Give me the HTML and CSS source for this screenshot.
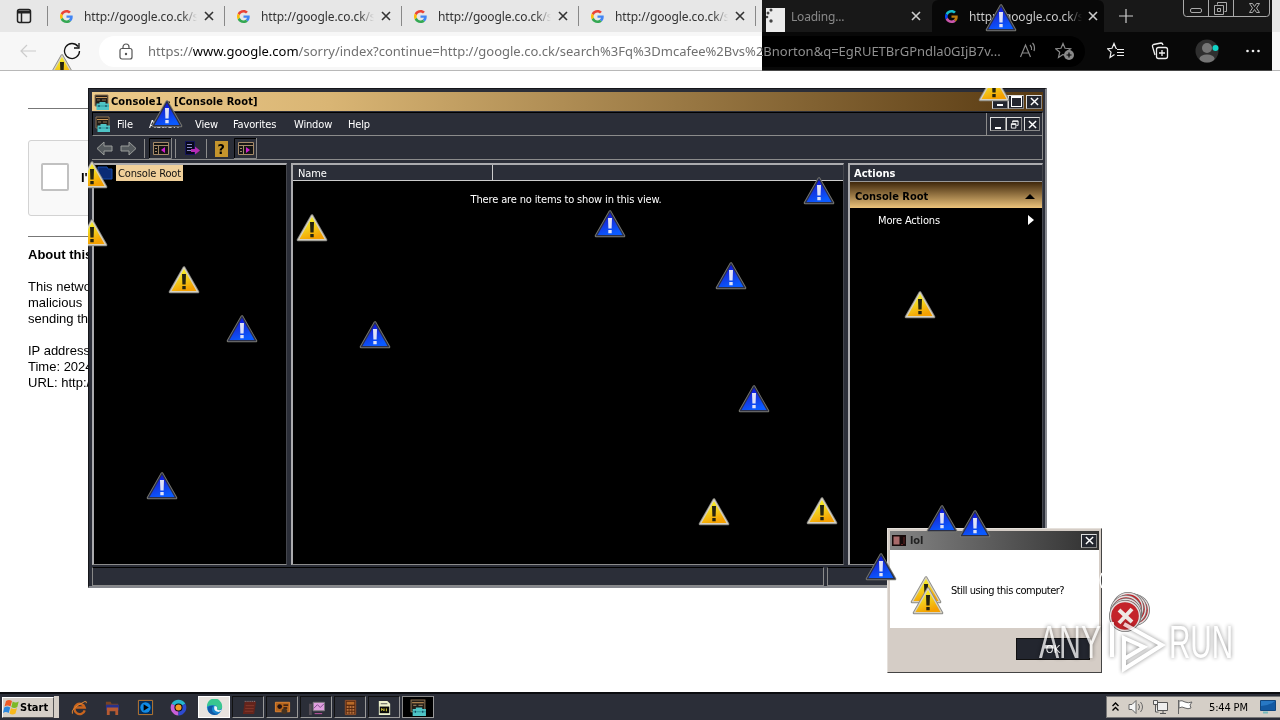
FILE: index.html
```
<!DOCTYPE html>
<html lang="en">
<head>
    <meta charset="UTF-8">
    <title>Desktop</title>
    <link rel="stylesheet" href="styles.css">
</head>
<body>
    <svg class="defs" width="0" height="0">
        <defs>
            <linearGradient id="gold" x1="0" y1="0" x2="0.4" y2="1">
                <stop offset="0" stop-color="#ffff20"/><stop offset="0.45" stop-color="#f2dc25"/><stop offset="1" stop-color="#f5a000"/>
            </linearGradient>
            <linearGradient id="blue" x1="0" y1="0" x2="0.4" y2="1">
                <stop offset="0" stop-color="#0000e8"/><stop offset="0.5" stop-color="#1530dc"/><stop offset="1" stop-color="#0a5aff"/>
            </linearGradient>
            <symbol id="warn" viewBox="0 0 32 28">
                <path d="M16 1.5 30 26H2Z" fill="url(#gold)" stroke="#8c8c88" stroke-width="2.6" stroke-linejoin="round"/>
                <path d="M16 1.8 29.6 25.7H2.4Z" fill="url(#gold)" stroke="#d8d2c0" stroke-width="1.3" stroke-linejoin="round"/>
                <path d="M14 8h4l-.4 10.500h-3.200zM14.300 20h3.400v3.300h-3.400z" fill="#25230f"/>
            </symbol>
            <symbol id="info" viewBox="0 0 32 28">
                <path d="M16 1.5 30 26H2Z" fill="url(#blue)" stroke="#77776f" stroke-width="2.6" stroke-linejoin="round"/>
                <path d="M16 1.8 29.6 25.7H2.4Z" fill="url(#blue)" stroke="#2a2f48" stroke-width="1.3" stroke-linejoin="round"/>
                <path d="M14 8h4l-.4 10.500h-3.200zM14.300 20h3.400v3.300h-3.400z" fill="#dfe2f8"/>
            </symbol>
            <symbol id="error" viewBox="0 0 34 34">
                <circle cx="17" cy="17" r="15" fill="#c4232a" stroke="#777" stroke-width="2"/>
                <circle cx="17" cy="17" r="14.500" fill="none" stroke="#e8dede" stroke-width="1.300"/>
            </symbol>
            <symbol id="google" viewBox="0 0 48 48">
                <path fill="#ea4335" d="M24 9.500c3.540 0 6.710 1.220 9.210 3.600l6.850-6.850C35.900 2.380 30.470 0 24 0 14.620 0 6.510 5.380 2.560 13.220l7.980 6.190C12.430 13.720 17.740 9.500 24 9.500z"/>
                <path fill="#4285f4" d="M46.980 24.550c0-1.570-.15-3.090-.38-4.550H24v9.020h12.940c-.58 2.960-2.260 5.480-4.780 7.180l7.730 6c4.510-4.180 7.090-10.360 7.090-17.650z"/>
                <path fill="#fbbc05" d="M10.530 28.590c-.48-1.450-.76-2.990-.76-4.590s.27-3.140.76-4.590l-7.980-6.190C.92 16.460 0 20.120 0 24s.92 7.540 2.560 10.780z"/>
                <path fill="#34a853" d="M24 48c6.480 0 11.930-2.130 15.890-5.810l-7.730-6c-2.150 1.450-4.920 2.300-8.160 2.300-6.260 0-11.570-4.220-13.470-9.910l-7.980 6.190C6.510 42.620 14.620 48 24 48z"/>
            </symbol>
            <symbol id="mmc" viewBox="0 0 16 16">
                <path d="M1 1h13v11H1z" fill="#221d18" stroke="#8b7355"/>
                <path d="M2 3.500h11" stroke="#c9975a"/><path d="M3 6h3M8 6h4" stroke="#8b7355"/>
                <path d="M2.500 9.500h3V8h6v1.500H15V16H2.500z" fill="#4fc4c6"/>
                <path d="M2.500 12H15" stroke="#2f9a9d"/><path d="M5 11v2M12 11v2" stroke="#135"/>
            </symbol>
            <symbol id="cross" viewBox="0 0 10 10">
                <path d="M1 1l8 8M9 1 1 9" fill="none" stroke="currentColor" stroke-width="1.600"/>
            </symbol>
        </defs>
    </svg>

    <div class="browser">
        <div class="tabs">
            <div class="tab-menu">
                <svg width="16" height="16" viewBox="0 0 16 16" fill="none" stroke="#222" stroke-width="1.500"><rect x="1.500" y="1.500" width="13" height="13" rx="2"/><path d="M1.500 4h13" stroke-width="3"/><path d="M5.500 4v10"/></svg>
            </div>
            <div class="tab"><svg class="fav"><use href="#google"/></svg><span class="tab-name">http://google.co.ck/s</span><svg class="x"><use href="#cross"/></svg></div>
            <div class="tab"><svg class="fav"><use href="#google"/></svg><span class="tab-name">http://google.co.ck/s</span><svg class="x"><use href="#cross"/></svg></div>
            <div class="tab"><svg class="fav"><use href="#google"/></svg><span class="tab-name">http://google.co.ck/s</span><svg class="x"><use href="#cross"/></svg></div>
            <div class="tab"><svg class="fav"><use href="#google"/></svg><span class="tab-name">http://google.co.ck/s</span><svg class="x"><use href="#cross"/></svg></div>
            <div class="tab loading">
                <svg class="spin" viewBox="0 0 19 24"><path d="M0 0h19v24H0z" fill="#141414"/><g fill="#bbb"><circle cx="5" cy="2" r="1.500"/><circle cx="2" cy="5" r="1.500"/><circle cx="1" cy="9" r="1.300"/><circle cx="5" cy="13" r="1.700"/></g></svg>
                <span class="tab-name">Loading...</span><svg class="x"><use href="#cross"/></svg>
            </div>
            <div class="tab active"><svg class="fav"><use href="#google"/></svg><span class="tab-name">http://google.co.ck/s</span><svg class="x"><use href="#cross"/></svg></div>
            <svg class="plus" width="16" height="16" viewBox="0 0 16 16"><path d="M8 1v14M1 8h14" stroke="#333" stroke-width="1.200"/></svg>
            <svg class="win-btns" width="92" height="18" viewBox="0 0 92 18" fill="none" stroke="#555">
                <path d="M2.500 0v13q0 3.500 3 3.500h80q3 0 3-3.500V0M27.500 0v16M52.500 0v16"/>
                <rect x="9.500" y="8.500" width="11" height="4" rx="1.500"/>
                <path d="M36.500 4.500v-2h9v9h-2M33.500 5.500h9v9h-9zM36.500 8.500h3v3h-3z"/>
                <path d="M68.500 3.500h3l2 3 2-3h3l-3 4.500 3 4.500h-3l-2-3-2 3h-3l3-4.500z"/>
            </svg>
        </div>
        <div class="toolbar">
            <svg class="back" width="18" height="16" viewBox="0 0 18 16"><path d="M17 8H2M8 2 2 8l6 6" fill="none" stroke="#ccc" stroke-width="1.200"/></svg>
            <svg class="reload" width="18" height="18" viewBox="0 0 18 18"><path d="M16.500 9A7.500 7.500 0 1 1 15 4.500M16 1v5h-5" fill="none" stroke="#111" stroke-width="1.300"/></svg>
            <div class="address">
                <svg width="14" height="17" viewBox="0 0 14 17" fill="none" stroke="#555" stroke-width="1.200"><rect x="1" y="5.500" width="12" height="10.500" rx="2"/><path d="M4 5.500V4a3 3 0 0 1 6 0v1.500"/><circle cx="7" cy="11" r=".6" fill="#555"/></svg>
                <span class="url">https://<b>www.google.com</b>/sorry/index?continue=http://google.co.ck/search%3Fq%3Dmcafee%2Bvs%2Bnorton&amp;q=EgRUETBrGPndla0GIjB7v...</span>
                <svg class="read" width="18" height="18" viewBox="0 0 18 18" fill="none" stroke="#777" stroke-width="1.200"><path d="M1.500 15 6.500 3l5 12M3.300 11h6.400M11 3q2 2 1.500 5M13.500 1q3 3 1.500 8"/></svg>
                <svg width="20" height="18" viewBox="0 0 20 18"><path d="m8 1.500 2 4.800 5.500.4-4 3.500 1.200 5L8 12.500l-4.500 3 1.200-5.300-4-3.500 5.300-.4z" fill="none" stroke="#777" stroke-width="1.200"/><circle cx="14" cy="13" r="5" fill="#777"/><path d="M14 10.500v5M11.500 13h5" stroke="#fff" stroke-width="1.200"/></svg>
            </div>
            <div class="tools">
                <svg width="18" height="18" viewBox="0 0 18 18" fill="none" stroke="#111" stroke-width="1.200"><path d="m10 6.500-1-.2L7 1.500 5 6.300l-4.500.4 3.500 3.500-1 5.300 4.500-3M10 7.500h7M10 10.500h7M10 13.500h7"/></svg>
                <svg width="18" height="18" viewBox="0 0 18 18" fill="none" stroke="#111" stroke-width="1.300"><path d="M4 13 1.500 4.500Q1 3 2.500 2.500L10 1q1.500 0 2 2"/><rect x="5.500" y="5.500" width="11" height="11" rx="2"/><path d="M11 8v6M8 11h6"/></svg>
                <svg width="24" height="24" viewBox="0 0 24 24"><circle cx="12" cy="12" r="11.500" fill="#d0d0d0"/><circle cx="12" cy="9" r="5" fill="#8a8a8a"/><ellipse cx="12" cy="19.500" rx="7.500" ry="4" fill="#8a8a8a"/><circle cx="20.500" cy="9" r="3" fill="#ef2b38"/></svg>
                <svg width="16" height="4" viewBox="0 0 16 4" fill="#111"><circle cx="2.500" cy="2" r="1.300"/><circle cx="8" cy="2" r="1.300"/><circle cx="13.500" cy="2" r="1.300"/></svg>
            </div>
        </div>
    </div>
    <div class="invert"></div>

    <div class="page">
        <hr>
        <div class="captcha"><span class="check"></span><b>I'm</b></div>
        <hr>
        <p class="about"><b>About this</b></p>
        <p>This network<br>malicious<br>sending the</p>
        <p>IP address:<br>Time: 2024<br>URL: http://</p>
    </div>

    <div class="console">
        <div class="title">
            <svg class="ico"><use href="#mmc"/></svg><span>Console1 - [Console Root]</span>
            <div class="btns"><i class="btn min"></i><i class="btn max"></i><i class="btn"><svg><use href="#cross"/></svg></i></div>
        </div>
        <div class="menu">
            <svg class="ico"><use href="#mmc"/></svg>
            <span class="m-file">File</span><span class="m-action">Action</span><span class="m-view">View</span><span class="m-fav">Favorites</span><span class="m-win">Window</span><span>Help</span>
            <div class="btns"><i class="btn min"></i><i class="btn"><svg viewBox="0 0 10 10" fill="none" stroke="#fff"><path d="M3 3V1h6v5H7M3 1.500h6M1.500 4h5v5h-5zM1.500 5h5"/></svg></i><i class="btn"><svg><use href="#cross"/></svg></i></div>
        </div>
        <div class="bar">
            <svg width="195" height="22" viewBox="0 0 195 22">
                <path d="m4 11.500 7-6.500v4h8v5h-8v4z" fill="#555a5e" stroke="#9b9d9b"/>
                <path d="m43 11.500-7-6.500v4h-8v5h8v4z" fill="#555a5e" stroke="#9b9d9b"/>
                <path d="M51.500 2v19M82.500 2v19M113.500 2v19" stroke="#8c8c8c"/>
                <g id="panel"><path d="M56.500 21V1.500H78" stroke="#000" fill="none"/><path d="M78.500 1v20.500H56" stroke="#888" fill="none"/>
                <path d="M60.500 5.500h15v12h-15z" fill="#151515" stroke="#a58a69"/><path d="M60 8.500h16M65.500 9v8M62 11.500h2M62 14.500h2" stroke="#a58a69"/></g>
                <path d="m72 10-4 3 4 3z" fill="#d21ed2"/>
                <path d="M92.500 4.500h9v13h-9z" fill="#08081b" stroke="#14145a"/><path d="M94 7.500h5M94 10.500h5M94 13.500h5" stroke="#8888c4"/><path d="M98 12h4V9.500l5 4-5 4V15h-4z" fill="#b52bb5"/>
                <path d="M122 4h13v16h-13z" fill="#c5952d"/><text x="124.500" y="17" class="help">?</text>
                <use href="#panel" x="85"/><path d="m153 10 4 3-4 3z" fill="#d21ed2"/>
            </svg>
        </div>
        <div class="panes">
            <div class="pane tree">
                <svg width="16" height="14" viewBox="0 0 16 14"><path d="M1 1h9l1 2h4v10H1z" fill="#0a2b75" stroke="#174aa8"/></svg>
                <span>Console Root</span>
            </div>
            <div class="pane list">
                <div class="cols"><span>Name</span></div>
                <p>There are no items to show in this view.</p>
            </div>
            <div class="pane actions">
                <div class="head">Actions</div>
                <div class="group"><span>Console Root</span><svg width="10" height="5"><path d="M0 5 5 0l5 5z"/></svg></div>
                <div class="more"><span>More Actions</span><svg width="6" height="10"><path d="m0 0 6 5-6 5z" fill="#fff"/></svg></div>
            </div>
        </div>
        <div class="status"><span></span><span></span></div>
    </div>

    <div class="dialog">
        <div class="dialog-title">
            <svg width="14" height="11" viewBox="0 0 14 11"><path d="M0 0h14v11H0z" fill="#160a0a"/><path d="M1.500 1.500h6v8h-6z" fill="#a86a6a"/><path d="M9 9.500h2M12 2v7" stroke="#622"/></svg>
            <span>lol</span>
            <i class="btn"><svg><use href="#cross"/></svg></i>
        </div>
        <div class="dialog-body">Still using this computer?</div>
        <div class="dialog-foot"><button>OK</button></div>
    </div>

    <div class="taskbar">
        <div class="start">
            <svg width="17" height="16" viewBox="0 0 17 16"><path d="M3 2q3-2 6 0L7.500 7.500q-3-2-6 0z" fill="#ef5a24"/><path d="M9.700 2.500q3 2 6 0L14.300 8q-3 2-6 0z" fill="#7db928"/><path d="M1.200 8.500q3-2 6 0L5.700 14q-3-2-5.700 0z" fill="#2a86dc"/><path d="M8 9q3 2 6 0l-1.500 5.500q-3 2-6 0z" fill="#f8b91c"/></svg>
            <b>Start</b>
        </div>
        <i class="grip"></i>
        <div class="quick">
            <svg viewBox="0 0 18 18" fill="none"><path d="M14.500 12A5.500 5.500 0 1 1 14.500 9H5" stroke="#c8641e" stroke-width="2.500"/><path d="M1.500 15.500Q-1 10 15 2.500q2 0 1 2" stroke="#e58a35"/></svg>
            <svg viewBox="0 0 18 18"><path d="M2 3h5l1 2h7v3H2z" fill="#7a4422"/><path d="M2 6h14v6H2z" fill="#28318b"/><path d="M3 9h12v8h-3v-4H6v4H3z" fill="#b65a32"/></svg>
            <svg viewBox="0 0 18 18"><path d="M1.500 1.500h15v15h-15z" fill="#062c57" stroke="#c17a30"/><circle cx="9" cy="9" r="5.500" fill="#118be6"/><path d="m7 5.500 5.500 3.500L7 12.500z" fill="#050505"/></svg>
            <svg viewBox="0 0 18 18"><path d="M9 9 1.700 5A8.500 8.500 0 0 1 16.300 5z" fill="#25b6cf"/><path d="M9 9 1.700 5A8.500 8.500 0 0 0 9 17.500z" fill="#c95fd8"/><path d="m9 9 7.300-4A8.500 8.500 0 0 1 9 17.500z" fill="#2d4ad0"/><circle cx="9" cy="9" r="4.300" fill="#101010"/><circle cx="9" cy="9" r="3.200" fill="#f39a25"/></svg>
        </div>
        <div class="tasks">
            <div class="task edge"><svg viewBox="0 0 18 18"><circle cx="9" cy="9" r="8" fill="#1685cf"/><path d="M1 8a8 8 0 0 1 16-1q1 5-5 4.500 1-5-4-5-5 0-7 1.500z" fill="#39c790"/><path d="M8 7q-4 5 1 8 3 1.500 6-.5-7 5-12-.5Q-.5 7 8 7z" fill="#1258a5"/><path d="M9 7.500q3.500 0 2.700 3.500 1.800 1.500 5 .2-1 2.300-3.500 2.500Q7 13 9 7.500z" fill="#eef6f8"/></svg></div>
            <div class="task"><svg viewBox="0 0 18 18"><path d="M5 3h12l-2 13H3z" fill="#64241c"/><path d="M6 7h9M5.500 10h9M5 13h9" stroke="#84382c"/><path d="M5 2.500h12" stroke="#a88" stroke-dasharray="1 1"/></svg></div>
            <div class="task"><svg viewBox="0 0 18 18"><path d="M1.500 3.500h15v10h-15z" fill="#b7661d" stroke="#e08432"/><circle cx="6" cy="8" r="2.500" fill="#211"/><path d="M10 6.500h5M10 9.500h4" stroke="#211" stroke-width="1.500"/><circle cx="11" cy="13" r="3" fill="#432"/></svg></div>
            <div class="task"><svg viewBox="0 0 18 18"><path d="M5.500 3.500h12v9h-12z" fill="#dfa0df" stroke="#777"/><path d="m6 10 4-4 3 3 4-4" stroke="#80478a" fill="none"/><path d="M1 5h3v12H1z" fill="#534c54"/><path d="M7 15.500h8" stroke="#c5a"/></svg></div>
            <div class="task"><svg viewBox="0 0 18 18"><path d="M3.500 1.500h11v15h-11z" fill="#5b2b10" stroke="#92512c"/><path d="M5 3h8v3H5z" fill="#b86a28"/><path d="M5 8.500h8M5 11.500h8M5 14.500h8" stroke="#b8713c" stroke-width="2" stroke-dasharray="2 1"/></svg></div>
            <div class="task"><svg viewBox="0 0 18 18"><path d="M3 2h9l3 3v12H3z" fill="#eef2cd"/><path d="M5 5h7" stroke="#555"/><path d="M4 8h10v7H4z" fill="#0a0a0a"/><path d="M6 12.500V10l2.500 2.500V10M11 10v3" stroke="#e6d93a" fill="none"/></svg></div>
            <div class="task current"><svg><use href="#mmc"/></svg></div>
        </div>
        <div class="tray">
            <svg width="7" height="10" viewBox="0 0 7 10"><path d="m.5 4 3-3 3 3M.5 8.500l3-3 3 3" fill="none" stroke="#000" stroke-width="1.400"/></svg>
            <svg class="sound" width="17" height="16" viewBox="0 0 17 16" fill="#f5f5f5" stroke="#666"><path d="M1 5.500h3l4-4v13l-4-4H1z"/><path d="M10.500 5q2 3 0 6M12.500 3q4 5 0 10" fill="none"/></svg>
            <svg class="net" width="17" height="16" viewBox="0 0 17 16" fill="#eee" stroke="#555"><path d="M5.500 3.500h10v8h-10zM8 14.500h6M11 12v2M1.500 1.500h4v4h-4zM3.500 6v7h3"/></svg>
            <svg class="flag" width="17" height="16" viewBox="0 0 17 16" fill="#fff" stroke="#666"><path d="M2.500 1v14M3 2q3-1 6 1 3 1.500 7 0l-2 3 1 3q-3 1.500-6 0-3-2-6 0z"/></svg>
            <span class="clock">5:44 PM</span>
            <svg width="16" height="14" viewBox="0 0 16 14"><path d="M.5.5h15v10H.5z" fill="#2778c4" stroke="#12477e"/><path d="M1 6q8 0 14-5v9H1z" fill="#1259a2"/><path d="M3 12.500h5" stroke="#7bb" stroke-width="2"/></svg>
        </div>
    </div>

    <!-- cursor icons left all over the desktop -->
    <svg class="trail" width="1280" height="720">
        <svg width="1280" height="70"><use href="#warn" x="46" y="54" width="32" height="28"/></svg>
        <svg x="88" y="88" width="1000" height="500">
            <use href="#warn" x="-12" y="73" width="32" height="28"/>
            <use href="#warn" x="-12" y="131" width="32" height="28"/>
            <use href="#warn" x="890" y="-14" width="32" height="28"/>
        </svg>
        <use href="#warn" x="168" y="266" width="32" height="28"/>
        <use href="#warn" x="296" y="214" width="32" height="28"/>
        <use href="#warn" x="904" y="291" width="32" height="28"/>
        <use href="#warn" x="698" y="498" width="32" height="28"/>
        <use href="#warn" x="806" y="497" width="32" height="28"/>
        <use href="#warn" x="910" y="576" width="32" height="28"/>
        <use href="#warn" x="912" y="587" width="32" height="28"/>
        <use href="#info" x="985" y="4" width="32" height="28"/>
        <use href="#info" x="151" y="100" width="32" height="28"/>
        <use href="#info" x="226" y="315" width="32" height="28"/>
        <use href="#info" x="359" y="321" width="32" height="28"/>
        <use href="#info" x="146" y="472" width="32" height="28"/>
        <use href="#info" x="594" y="210" width="32" height="28"/>
        <use href="#info" x="715" y="262" width="32" height="28"/>
        <use href="#info" x="803" y="177" width="32" height="28"/>
        <use href="#info" x="738" y="385" width="32" height="28"/>
        <use href="#info" x="926" y="505" width="32" height="28"/>
        <use href="#info" x="959" y="510" width="32" height="28"/>
        <use href="#info" x="865" y="553" width="32" height="28"/>
        <path d="M1102 573q-4 7 0 15" fill="none" stroke="#fff" stroke-width="1.500"/>
        <use href="#error" x="1117" y="593" width="34" height="34"/>
        <use href="#error" x="1114" y="592" width="34" height="34"/>
        <use href="#error" x="1111" y="591" width="34" height="34"/>
        <use href="#error" x="1109" y="594" width="34" height="34"/>
        <use href="#error" x="1109" y="597" width="34" height="34"/>
        <use href="#error" x="1108" y="599" width="34" height="34"/>
        <path d="m1119 610 13 12M1132 609l-13 14" stroke="#eee8e4" stroke-width="4"/>
        <g class="mark">
            <text x="1039" y="658" textLength="62" lengthAdjust="spacingAndGlyphs">ANY</text>
            <text x="1169" y="658" textLength="64" lengthAdjust="spacingAndGlyphs">RUN</text>
            <path d="M1112 657v-35M1124 624l38 21-38 24v-31l20 9-20 12" class="mark-logo"/>
        </g>
    </svg>
</body>
</html>
```
FILE: styles.css
```
body {
    margin: 0;
    width: 1280px;
    height: 720px;
    overflow: hidden;
    background: #fff;
    position: relative;
    font-family: "DejaVu Sans Condensed", "DejaVu Sans", sans-serif;
    font-stretch: condensed;
    font-size: 11px;
    letter-spacing: -0.15px;
}
* {
    box-sizing: border-box;
}
svg {
    flex: none;
    display: block;
}
.defs {
    position: absolute;
}

/* browser */
.browser {
    height: 71px;
    background: #f7f7f7;
    border-bottom: 1px solid #b8b8b8;
    font-family: "Noto Sans", sans-serif;
    font-stretch: normal;
    letter-spacing: 0;
}
.tabs {
    display: flex;
    height: 32px;
    background: #e7e7e7;
    align-items: center;
}
.tab-menu {
    width: 47px;
    padding-left: 16px;
}
.tab {
    width: 177px;
    height: 32px;
    display: flex;
    align-items: center;
    padding-left: 13px;
    color: #333;
    position: relative;
}
.tab::before {
    content: "";
    position: absolute;
    left: 0;
    top: 6px;
    width: 1px;
    height: 20px;
    background: #888;
}
.tab .fav {
    width: 13px;
    height: 13px;
    margin-right: 11px;
}
.tab-name {
    width: 113px;
    overflow: hidden;
    white-space: nowrap;
    font-size: 12px;
    letter-spacing: -0.1px;
    -webkit-mask-image: linear-gradient(90deg, #000 98px, transparent 113px);
    mask-image: linear-gradient(90deg, #000 98px, transparent 113px);
}
.tab .x {
    width: 10px;
    height: 10px;
    margin-left: 7px;
}
.tab.active {
    width: 172px;
    background: #f7f7f7;
    border-radius: 6px 6px 0 0;
    padding-left: 13px;
}
.tab.active .x {
    margin-left: 6px;
}
.tab.active::before {
    display: none;
}
.tab.loading {
    padding-left: 11px;
}
.loading .spin {
    width: 19px;
    height: 24px;
    margin: 8px 6px 0 0;
}
.tab.loading .tab-name {
    color: #777;
    letter-spacing: -0.2px;
}
.plus {
    margin-left: 14px;
}
.win-btns {
    margin: 0 0 14px 47px;
}
.toolbar {
    display: flex;
    height: 38px;
    align-items: center;
    padding-left: 19px;
}
.reload {
    margin-left: 26px;
}
.address {
    width: 986px;
    height: 31px;
    margin-left: 18px;
    padding-left: 20px;
    background: #fff;
    border-radius: 16px;
    display: flex;
    align-items: center;
}
.url {
    flex: none;
    width: 871px;
    margin-left: 15px;
    font-size: 13px;
    white-space: nowrap;
    color: #707070;
}
.url b {
    font-weight: normal;
    color: #000;
}
.address .read {
    margin-right: 18px;
}
.tools {
    display: flex;
    align-items: center;
    gap: 26px;
    margin-left: 22px;
}
/* flips every colour under it */
.invert {
    position: absolute;
    left: 762px;
    top: 0;
    width: 510px;
    height: 71px;
    background: #fff;
    mix-blend-mode: difference;
}

/* page behind the console */
.page {
    padding: 37px 0 0 28px;
    width: 300px;
    font: 13px/16px "Liberation Sans", Arial, sans-serif;
    letter-spacing: 0;
    color: #000;
}
.page hr {
    margin: 0;
    border: 0;
    border-top: 1px solid #777;
}
.page p {
    margin: 0 0 16px;
    white-space: nowrap;
}
.page .about {
    margin-top: 10px;
}
.captcha {
    height: 76px;
    margin: 31px 0 20px;
    padding-left: 12px;
    background: #f9f9f9;
    border: 1px solid #d3d3d3;
    border-radius: 3px;
    display: flex;
    align-items: center;
    gap: 12px;
}
.check {
    width: 28px;
    height: 28px;
    margin-bottom: 2px;
    background: #fff;
    border: 2px solid #c1c1c1;
    border-radius: 2px;
}

/* console window */
.console {
    position: absolute;
    left: 88px;
    top: 88px;
    width: 959px;
    height: 500px;
    background: #2b2e38;
    border: 1px solid #15161a;
    border-right: 2px solid #85878d;
    border-bottom: 2px solid #85878d;
    padding: 3px 2px 0 3px;
    color: #fff;
}
.title {
    display: flex;
    align-items: center;
    height: 19px;
    padding: 0 1px 0 2px;
    background: linear-gradient(90deg, #ecca8a, #d9b574 25%, #583a12);
    color: #000;
    font-weight: bold;
    letter-spacing: 0.1px;
}
.ico {
    width: 16px;
    height: 16px;
    margin-right: 1px;
}
.btns {
    display: flex;
    margin-left: auto;
}
.btn {
    width: 16px;
    height: 14px;
    background: #23262f;
    border: 1px solid #ddd;
    border-right-color: #888;
    border-bottom-color: #888;
    color: #fff;
    display: flex;
    align-items: center;
    justify-content: center;
}
.btn:last-child {
    margin-left: 2px;
}
.btn svg {
    width: 9px;
    height: 9px;
}
.btn.min::before {
    content: "";
    width: 6px;
    height: 2px;
    margin-top: 7px;
    background: #fff;
}
.btn.max::before {
    content: "";
    width: 9px;
    height: 8px;
    border: 1px solid #fff;
    border-top-width: 2px;
}
.menu {
    height: 24px;
    margin-top: 1px;
    padding: 0 2px;
    border: 1px solid #8b8b8b;
    border-left-color: #000;
    border-top-color: #000;
    display: flex;
    align-items: center;
}
.m-file {
    width: 32px;
    margin-left: 5px;
}
.m-action {
    width: 46px;
}
.m-view {
    width: 38px;
}
.m-fav {
    width: 61px;
}
.m-win {
    width: 54px;
}
.menu .btns {
    align-self: stretch;
    align-items: center;
    padding-left: 3px;
    border-left: 1px solid #8b8b8b;
}
.bar {
    height: 24px;
    padding: 1px 0 0 1px;
    border-bottom: 1px solid #8b8b8b;
    border-right: 1px solid #8b8b8b;
}
.help {
    font-weight: bold;
    font-size: 14px;
}
.panes {
    display: flex;
    gap: 4px;
    height: 402px;
    margin-top: 3px;
}
.pane {
    background: #000;
    border: 2px solid #ababae;
    border-right: 1px solid #44464d;
    border-bottom: 1px solid #8b8b8b;
}
.tree {
    width: 195px;
    display: flex;
    align-items: flex-start;
    padding: 0 0 0 3px;
}
.tree span {
    margin-left: 3px;
    height: 16px;
    padding: 0 2px;
    line-height: 17px;
    background: #f0d09a;
    color: #111;
}
.tree svg {
    margin-top: 1px;
}
.list {
    width: 553px;
}
.cols {
    height: 16px;
    background: #2b2e38;
    border-bottom: 1px solid #ccc;
    line-height: 18px;
}
.cols span {
    display: block;
    width: 200px;
    height: 15px;
    padding-left: 5px;
    border-right: 1px solid #ccc;
}
.list p {
    margin: 12px 4px 0 0;
    text-align: center;
}
.actions {
    flex: 1;
}
.head {
    height: 17px;
    padding-left: 4px;
    line-height: 18px;
    background: #2b2e38;
    border-bottom: 1px solid #999;
    font-weight: bold;
    letter-spacing: 0;
}
.group {
    height: 26px;
    padding: 2px 7px 0 5px;
    display: flex;
    align-items: center;
    justify-content: space-between;
    background: linear-gradient(#3f270b, #ecc37b);
    color: #000;
    font-weight: bold;
    letter-spacing: 0;
}
.more {
    display: flex;
    align-items: center;
    justify-content: space-between;
    height: 24px;
    padding: 0 8px 0 28px;
}
.status {
    display: flex;
    gap: 3px;
    margin-top: 2px;
}
.status span {
    height: 19px;
    flex: 1;
    border: 1px solid #8b8b8b;
    border-top-color: #000;
    border-left-color: #888;
}
.status span:first-child {
    flex: none;
    width: 732px;
}

/* message box */
.dialog {
    position: absolute;
    left: 887px;
    top: 528px;
    width: 215px;
    height: 145px;
    padding: 2px;
    background: #d5cdc6;
    border: 1px solid #e5e0db;
    border-right-color: #444;
    border-bottom-color: #444;
}
.dialog-title {
    height: 19px;
    padding: 0 2px;
    display: flex;
    align-items: center;
    background: linear-gradient(90deg, #858585, #303030);
    color: #222;
}
.dialog-title span {
    margin-left: 4px;
    font-weight: bold;
    font-size: 11px;
}
.dialog-title .btn {
    margin-left: auto;
}
.dialog-body {
    height: 78px;
    padding-left: 61px;
    line-height: 81px;
    letter-spacing: -0.48px;
    background: #fff;
    color: #000;
}
.dialog-foot {
    padding: 10px 9px;
    display: flex;
    justify-content: flex-end;
}
.dialog-foot button {
    width: 74px;
    height: 22px;
    padding: 0;
    background: #23262f;
    border: 1px solid #111;
    color: #fff;
    font: inherit;
}

/* taskbar */
.taskbar {
    position: absolute;
    left: 0;
    top: 692px;
    width: 1280px;
    height: 28px;
    background: #2b2e38;
    border-top: 2px solid #0c0d10;
    display: flex;
    padding-left: 2px;
    align-items: center;
}
.start {
    width: 52px;
    height: 21px;
    background: #d5cfc7;
    border: 1px solid #fff;
    border-right-color: #555;
    border-bottom-color: #555;
    display: flex;
    align-items: center;
    color: #000;
    letter-spacing: 0;
}
.grip {
    width: 5px;
    height: 22px;
    background: #d5cfc7;
}
.quick {
    display: flex;
    gap: 16px;
    margin-left: 12px;
}
.quick svg,
.task svg {
    width: 17px;
    height: 17px;
}
.tasks {
    display: flex;
    gap: 2px;
    margin-left: 11px;
}
.task {
    width: 32px;
    height: 22px;
    display: flex;
    align-items: center;
    justify-content: center;
    border: 1px solid #111;
    border-right: 1px solid #999;
    border-bottom: 1px solid #999;
}
.task.edge {
    background: #e7e3df;
    border-color: #fff;
}
.task.current {
    background: #000;
    border-top-color: #888;
    border-left-color: #888;
}
.tray {
    display: flex;
    align-items: center;
    width: 174px;
    height: 22px;
    margin-left: auto;
    padding-left: 5px;
    background: #d5cfc7;
    border: 1px solid #777;
    border-right: 0;
}
.tray .sound {
    margin-left: 9px;
}
.tray .net,
.tray .flag {
    margin-left: 7px;
}
.clock {
    width: 51px;
    margin-left: 16px;
    color: #000;
    white-space: nowrap;
}

.trail {
    position: absolute;
    left: 0;
    top: 0;
}
.mark {
    opacity: 0.75;
    fill: #fff;
    filter: drop-shadow(0 0 2px rgba(0, 0, 0, 0.6));
}
.mark text {
    font: 47px "Liberation Sans Narrow", "Liberation Sans", sans-serif;
}
.mark-logo {
    fill: none;
    stroke: #fff;
    stroke-width: 4;
}
```
